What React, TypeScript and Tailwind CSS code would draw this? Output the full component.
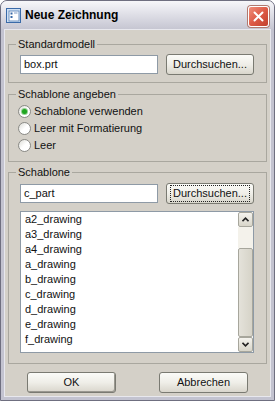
import React from "react";

const font = { fontFamily: '"Liberation Sans", Arial, sans-serif' };

const items = [
  "a2_drawing",
  "a3_drawing",
  "a4_drawing",
  "a_drawing",
  "b_drawing",
  "c_drawing",
  "d_drawing",
  "e_drawing",
  "f_drawing",
];

const XpButton = ({
  label,
  focused = false,
  isDefault = false,
  className = "",
}: {
  label: string;
  focused?: boolean;
  isDefault?: boolean;
  className?: string;
}) => (
  <button
    className={`flex items-center justify-center rounded-[3px] border border-[#7a7a72] bg-gradient-to-b from-[#fbfbf8] via-[#efeee8] to-[#d9d6cc] text-[11px] text-[#111] ${
      isDefault ? "shadow-[inset_-1px_-1px_0_#9a9890]" : ""
    } ${className}`}
  >
    <span
      className={`flex items-center justify-center h-[15px] px-[2px] ${
        focused ? "outline outline-1 outline-dotted outline-[#222]" : ""
      }`}
    >
      {label}
    </span>
  </button>
);

const Radio = ({ label, checked = false }: { label: string; checked?: boolean }) => (
  <div className="flex items-center h-[17px] ml-[2px] gap-[3px]">
    <span className="flex items-center justify-center w-[13px] h-[13px] rounded-full border border-[#8a8a86] bg-gradient-to-br from-[#dcdcd6] via-white to-white">
      {checked && (
        <span className="w-[5px] h-[5px] rounded-full bg-[#1fa51f] shadow-[0_0_0_1px_#8fd08f]" />
      )}
    </span>
    <span className="text-[11px] leading-[13px]">{label}</span>
  </div>
);

const ScrollBtn = ({ down = false }: { down?: boolean }) => (
  <div className="flex items-center justify-center h-[15px] rounded-[2px] border border-[#a7a69c] bg-gradient-to-b from-[#f4f3ee] to-[#d8d5c9]">
    <svg width="7" height="5" viewBox="0 0 7 5">
      <path
        d={down ? "M0.5 0.8 L3.5 3.8 L6.5 0.8" : "M0.5 4.2 L3.5 1.2 L6.5 4.2"}
        fill="none"
        stroke="#222"
        strokeWidth="1.6"
      />
    </svg>
  </div>
);

export default function App() {
  return (
    <div className="w-[275px] h-[401px] bg-white" style={font}>
      <div className="w-[275px] h-[401px] flex flex-col rounded-t-[7px] border border-[#6f6f80] bg-[#c3c3d0]">
        {/* Title bar */}
        <div className="h-[28px] flex items-center rounded-t-[6px] bg-gradient-to-b from-[#f7f7fa] via-[#dedee6] to-[#c6c6d2] pl-[5px] pr-[5px]">
          <svg width="15" height="15" viewBox="0 0 15 15" className="mr-[4px]">
            <rect x="0.5" y="0.5" width="14" height="14" fill="#cfe0f4" stroke="#3a6aa8" />
            <rect x="3" y="3" width="10" height="10" fill="#fff" stroke="#6a8fbf" />
            <rect x="4.5" y="4.5" width="2" height="2" fill="#3a6aa8" />
            <rect x="4.5" y="8" width="2" height="2" fill="#3a6aa8" />
            <rect x="8" y="4.5" width="3.5" height="1" fill="#7e9cc6" />
          </svg>
          <span className="text-[12px] font-bold text-black">Neue Zeichnung</span>
          <div className="ml-auto flex items-center justify-center w-[21px] h-[21px] mt-[2px] rounded-[3px] border border-white bg-gradient-to-br from-[#ef8f7c] via-[#dd5a47] to-[#c2402d] shadow-[0_0_0_1px_#b0796f]">
            <svg width="11" height="11" viewBox="0 0 11 11">
              <path d="M1.5 1.5 L9.5 9.5 M9.5 1.5 L1.5 9.5" stroke="#fff" strokeWidth="2" strokeLinecap="round" />
            </svg>
          </div>
        </div>

        {/* Body */}
        <div className="flex-1 mx-[3px] mb-[3px] bg-[#d4d0c8] px-[3px] text-[11px] text-[#111] border border-[#e8e8ee]">
          {/* Standardmodell */}
          <fieldset className="mt-[8px] border border-[#a9a79f] pl-[7px] pb-[7px]">
            <legend className="px-[2px] leading-[13px]">Standardmodell</legend>
            <div className="flex items-center ml-[4px] mt-[3px] gap-[8px] h-[21px]">
              <div className="w-[138px] h-[19px] border border-[#8e9aa6] bg-white flex items-center pl-[3px]">
                box.prt
              </div>
              <XpButton label="Durchsuchen..." className="w-[88px] h-[21px]" />
            </div>
          </fieldset>

          {/* Schablone angeben */}
          <fieldset className="mt-[5px] border border-[#a9a79f] pl-[7px] pb-[7px]">
            <legend className="px-[2px] leading-[13px]">Schablone angeben</legend>
            <div className="mt-[2px]">
              <Radio label="Schablone verwenden" checked />
              <Radio label="Leer mit Formatierung" />
              <Radio label="Leer" />
            </div>
          </fieldset>

          {/* Schablone */}
          <fieldset className="mt-[4px] border border-[#a9a79f] pl-[7px] pb-[10px]">
            <legend className="px-[2px] leading-[13px]">Schablone</legend>
            <div className="flex items-center ml-[4px] mt-[4px] gap-[8px] h-[21px]">
              <div className="w-[138px] h-[19px] border border-[#8e9aa6] bg-white flex items-center pl-[3px]">
                c_part
              </div>
              <XpButton label="Durchsuchen..." focused className="w-[88px] h-[21px]" />
            </div>
            <div className="ml-[4px] mt-[7px] w-[234px] h-[142px] border border-[#8e9aa6] bg-white flex">
              <div className="flex-1 pl-[4px]">
                {items.map((it) => (
                  <div key={it} className="h-[15px] leading-[15px]">
                    {it}
                  </div>
                ))}
              </div>
              <div className="w-[15px] flex flex-col">
                <ScrollBtn />
                <div className="h-[21px] bg-[#f4f2eb]" />
                <div className="flex-1 rounded-[2px] border border-[#a7a69c] bg-gradient-to-r from-[#e4e2da] to-[#d6d3c8]" />
                <ScrollBtn down />
              </div>
            </div>
          </fieldset>

          {/* Buttons */}
          <div className="flex mt-[8px] pl-[19px] gap-[43px]">
            <XpButton label="OK" isDefault className="w-[89px] h-[21px]" />
            <XpButton label="Abbrechen" className="w-[89px] h-[21px]" />
          </div>
        </div>
      </div>
    </div>
  );
}
